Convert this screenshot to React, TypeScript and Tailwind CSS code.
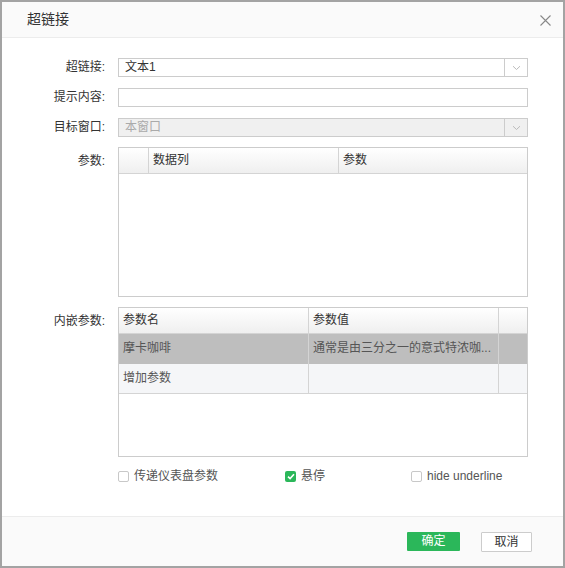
import React from 'react';

const FONT = { fontFamily: '"Liberation Sans", "Noto Sans CJK SC", sans-serif' };

const Chevron = () => (
  <svg width="9" height="6" viewBox="0 0 9 6" className="text-[#bbb]">
    <path d="M1 1.2 L4.5 4.5 L8 1.2" fill="none" stroke="currentColor" strokeWidth="1" />
  </svg>
);

const Label = ({ children }: { children: React.ReactNode }) => (
  <div className="w-[103px] shrink-0 text-right text-[12px] leading-[19px] text-[#333]">{children}</div>
);

const Check = ({ checked, label, className = '' }: { checked?: boolean; label: string; className?: string }) => (
  <div className={`flex items-center ${className}`}>
    {checked ? (
      <span className="w-[11px] h-[11px] rounded-[2px] bg-[#2bb75a] flex items-center justify-center">
        <svg width="8" height="7" viewBox="0 0 8 7">
          <path d="M1 3.6 L3.1 5.6 L7 1.3" fill="none" stroke="#fff" strokeWidth="1.6" />
        </svg>
      </span>
    ) : (
      <span className="w-[11px] h-[11px] rounded-[2px] border border-[#c8c8c8] bg-white" />
    )}
    <span className="ml-[5px] text-[12px] text-[#555]">{label}</span>
  </div>
);

export default function App() {
  return (
    <div style={FONT} className="w-[565px] h-[568px] border-2 border-[#a3a3a3] bg-white flex flex-col">
      {/* Header */}
      <div className="h-[36px] shrink-0 bg-[#fafafa] border-b border-[#ececec] flex items-center justify-between pl-[25px] pr-[12px]">
        <span className="text-[14px] text-[#333]">超链接</span>
        <svg width="11" height="11" viewBox="0 0 11 11" className="mt-[1px]">
          <path d="M0.5 0.5 L10.5 10.5 M10.5 0.5 L0.5 10.5" stroke="#888" strokeWidth="1.1" />
        </svg>
      </div>

      {/* Body */}
      <div className="flex-1 pt-[20px]">
        <div className="flex">
          <Label>超链接:</Label>
          <div className="ml-[13px] w-[410px] h-[19px] border border-[#ccc] flex">
            <div className="flex-1 px-[6px] text-[12px] leading-[17px] text-[#333]">文本1</div>
            <div className="w-[23px] border-l border-[#ccc] flex items-center justify-center">
              <Chevron />
            </div>
          </div>
        </div>

        <div className="flex mt-[11px]">
          <Label>提示内容:</Label>
          <div className="ml-[13px] w-[410px] h-[19px] border border-[#ccc] bg-white" />
        </div>

        <div className="flex mt-[11px]">
          <Label>目标窗口:</Label>
          <div className="ml-[13px] w-[410px] h-[19px] border border-[#ccc] bg-[#f0f0f0] flex">
            <div className="flex-1 px-[6px] text-[12px] leading-[17px] text-[#aaa]">本窗口</div>
            <div className="w-[23px] border-l border-[#ccc] flex items-center justify-center">
              <Chevron />
            </div>
          </div>
        </div>

        {/* 参数 table */}
        <div className="flex mt-[10px]">
          <Label>
            <span className="leading-[28px]">参数:</span>
          </Label>
          <div className="ml-[13px] w-[410px] h-[150px] border border-[#ccc] flex flex-col">
            <div className="h-[26px] border-b border-[#d4d4d4] bg-gradient-to-b from-white to-[#efefef] flex text-[12px] text-[#333]">
              <div className="w-[30px] border-r border-[#d4d4d4]" />
              <div className="w-[190px] border-r border-[#d4d4d4] pl-[4px] leading-[25px]">数据列</div>
              <div className="flex-1 pl-[4px] leading-[25px]">参数</div>
            </div>
          </div>
        </div>

        {/* 内嵌参数 table */}
        <div className="flex mt-[10px]">
          <Label>
            <span className="leading-[28px]">内嵌参数:</span>
          </Label>
          <div className="ml-[13px] w-[410px] h-[150px] border border-[#ccc] flex flex-col text-[12px]">
            <div className="h-[26px] border-b border-[#d4d4d4] bg-gradient-to-b from-white to-[#efefef] flex text-[#333]">
              <div className="w-[190px] border-r border-[#d4d4d4] pl-[4px] leading-[25px]">参数名</div>
              <div className="w-[190px] border-r border-[#d4d4d4] pl-[4px] leading-[25px]">参数值</div>
              <div className="flex-1" />
            </div>
            <div className="h-[30px] bg-[#bebebe] flex text-[#555]">
              <div className="w-[190px] border-r border-[#d4d4d4] pl-[4px] pt-[5px]">摩卡咖啡</div>
              <div className="w-[190px] border-r border-[#d4d4d4] pl-[4px] pt-[5px] whitespace-nowrap">
                通常是由三分之一的意式特浓咖...
              </div>
              <div className="flex-1" />
            </div>
            <div className="h-[30px] bg-[#f5f6f8] border-b border-[#d4d4d4] flex text-[#555]">
              <div className="w-[190px] border-r border-[#d4d4d4] pl-[4px] pt-[5px]">增加参数</div>
              <div className="w-[190px] border-r border-[#d4d4d4]" />
              <div className="flex-1" />
            </div>
          </div>
        </div>

        {/* Options */}
        <div className="flex mt-[11px] pl-[116px] h-[16px]">
          <Check label="传递仪表盘参数" className="w-[167px]" />
          <Check checked label="悬停" className="w-[126px]" />
          <Check label="hide underline" />
        </div>
      </div>

      {/* Footer */}
      <div className="h-[50px] shrink-0 bg-[#fafafa] border-t border-[#ececec] flex items-start justify-end pt-[15px] pr-[31px]">
        <button className="w-[53px] h-[19px] bg-[#2bb75a] text-white text-[12px] leading-[19px] rounded-[1px]">确定</button>
        <button className="ml-[21px] w-[51px] h-[20px] bg-white border border-[#ccc] text-[#333] text-[12px] leading-[18px] rounded-[1px]">取消</button>
      </div>
    </div>
  );
}
